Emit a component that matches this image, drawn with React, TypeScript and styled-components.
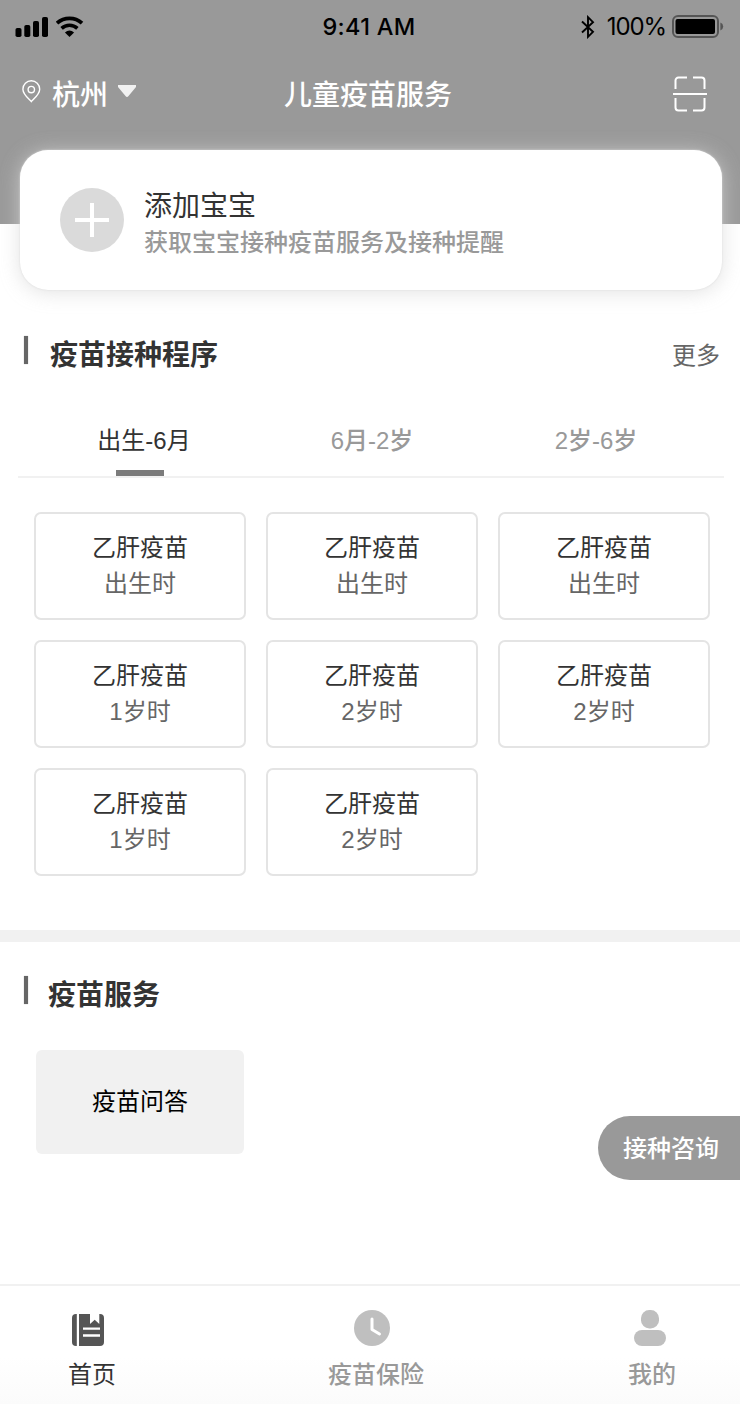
import React from 'react';
import styled, { createGlobalStyle } from 'styled-components';

const GlobalStyle = createGlobalStyle`
  * { box-sizing: border-box; }
  body {
    margin: 0;
    background: #fff;
    color: #333;
    font-family: "Liberation Sans", "Noto Sans CJK SC", sans-serif;
  }
  button { font: inherit; border: 0; padding: 0; background: none; color: inherit; }
  h1, h2, p { margin: 0; font-weight: 400; }
  svg { display: block; flex: none; }
`;

const Screen = styled.div`
  width: 740px;
  height: 1404px;
  position: relative;
  display: flex;
  flex-direction: column;
  overflow: hidden;
  background: #fff;
`;

const Header = styled.header`
  height: 224px;
  flex: none;
  background: #999;
`;

const StatusBar = styled.div`
  height: 52px;
  display: grid;
  grid-template-columns: 1fr auto 1fr;
  align-items: center;
  padding: 0 16px 0 15px;
  color: #000;
  font-family: Inter, sans-serif;
  font-size: 24px;
`;

const Signals = styled.div`
  display: flex;
  align-items: center;
  gap: 7px;
`;

const Clock = styled.span`
  font-weight: 500;
  font-size: 23.5px;
  line-height: 52px;
  letter-spacing: 0.3px;
  margin-right: 1px;
  padding-top: 1px;
`;

const Power = styled.div`
  display: flex;
  align-items: center;
  justify-content: flex-end;
`;

const Percent = styled.span`
  margin: 0 6px 0 12px;
  font-size: 24px;
  letter-spacing: -1.1px;
`;

const NavBar = styled.div`
  height: 84px;
  display: grid;
  grid-template-columns: 1fr auto 1fr;
  align-items: center;
  padding: 0 33px 0 22px;
  color: #fff;
  font-size: 28px;
  font-weight: 500;
`;

const City = styled.button`
  display: flex;
  align-items: center;
  color: #fff;
  span { margin: 0 10px 0 11px; padding-top: 4px; line-height: 40px; }
  svg { margin-bottom: 6px; }
`;

const PageTitle = styled.h1`
  font-size: 28px;
  font-weight: 500;
  line-height: 40px;
  padding-top: 4px;
  margin-left: 7px;
`;

const ScanButton = styled.button`
  justify-self: end;
`;

const AddCard = styled.section`
  width: 702px;
  height: 140px;
  flex: none;
  margin: -74px 0 0 20px;
  padding: 0 40px;
  display: flex;
  align-items: center;
  gap: 20px;
  border-radius: 28px;
  background: #fff;
  box-shadow: 0 2px 20px rgba(215, 215, 215, 0.75), 0 0 2px #ddd;
`;

const AddTitle = styled.p`
  font-size: 28px;
  line-height: 38px;
  color: #333;
`;

const AddHint = styled.p`
  font-size: 24px;
  font-weight: 500;
  line-height: 34px;
  color: #999;
`;

const AddText = styled.div`
  padding-top: 8px;
`;

const SectionHead = styled.div<{ $gap: number }>`
  height: 40px;
  display: flex;
  align-items: center;
  padding: 0 20px 0 24px;
  gap: ${(p) => p.$gap}px;
`;

const Marker = styled.i`
  width: 4px;
  height: 28px;
  margin-bottom: 8px;
  background: #666;
  box-shadow: 0 0 1px #777;
`;

const SectionTitle = styled.h2`
  font-size: 28px;
  font-weight: 700;
  line-height: 40px;
  padding-top: 4px;
  color: #333;
`;

const More = styled.a`
  margin-left: auto;
  padding-top: 3px;
  font-size: 24px;
  line-height: 40px;
  color: #666;
`;

const Schedule = styled.section`
  flex: none;
  height: 640px;
  padding-top: 44px;
`;

const Tabs = styled.div`
  height: 74px;
  margin: 30px 16px 0 18px;
  padding: 0 18px 0 10px;
  display: grid;
  grid-template-columns: 232px 224px 224px;
  border-bottom: 2px solid #f1f1f1;
`;

const Tab = styled.button<{ $active?: boolean }>`
  display: flex;
  flex-direction: column;
  align-items: center;
  justify-content: space-between;
  padding-top: 17px;
  font-size: 24px;
  font-weight: ${(p) => (p.$active ? 400 : 500)};
  line-height: 40px;
  color: ${(p) => (p.$active ? '#333' : '#999')};
  &::after {
    content: '';
    width: 48px;
    height: 6px;
    margin-right: 8px;
    background: ${(p) => (p.$active ? '#7b7b7b' : 'transparent')};
  }
`;

const VaccineGrid = styled.div`
  display: grid;
  grid-template-columns: repeat(3, 212px);
  grid-auto-rows: 108px;
  gap: 20px;
  padding: 34px 0 0 34px;
`;

const Vaccine = styled.div`
  border: 2px solid #e4e4e4;
  border-radius: 7px;
  padding-top: 16px;
  text-align: center;
  font-size: 24px;
  line-height: 36px;
  color: #333;
`;

const Age = styled.p`
  color: #666;
`;

const Services = styled.section`
  flex: 1;
  border-top: 12px solid #f1f1f1;
  padding-top: 32px;
`;

const ServiceTile = styled.button`
  display: block;
  width: 208px;
  height: 104px;
  margin: 36px 0 0 36px;
  padding-bottom: 6px;
  border-radius: 6px;
  background: #f1f1f1;
  color: #000;
  font-size: 24px;
`;

const ConsultButton = styled.button`
  position: absolute;
  right: 0;
  top: 1116px;
  width: 142px;
  height: 64px;
  padding: 0 0 4px 4px;
  border-radius: 32px 0 0 32px;
  background: #999;
  color: #fff;
  font-size: 24px;
  font-weight: 500;
`;

const TabBar = styled.nav`
  height: 120px;
  flex: none;
  display: flex;
  padding: 24px 0 0 68px;
  border-top: 2px solid #f1f1f1;
  background: linear-gradient(#fff 60%, #fbfbfb);
`;

const TabItem = styled.a<{ $before?: number; $shift: number; $active?: boolean }>`
  display: flex;
  flex-direction: column;
  align-items: center;
  margin-left: ${(p) => p.$before ?? 0}px;
  font-size: 24px;
  line-height: 36px;
  color: ${(p) => (p.$active ? '#333' : '#999')};
  font-weight: ${(p) => (p.$active ? 400 : 500)};
  svg { margin: 0 ${(p) => p.$shift}px 11px 0; }
`;

const CellularIcon = () => (
  <svg width="34" height="22" viewBox="0 0 34 22">
    <rect x="0.5" y="12" width="6" height="9" rx="1.8" />
    <rect x="9.3" y="9" width="6" height="12" rx="1.8" />
    <rect x="18" y="5" width="6" height="16" rx="1.8" />
    <rect x="27" y="1" width="6" height="20" rx="1.8" />
  </svg>
);

const WifiIcon = () => (
  <svg width="28" height="22" viewBox="0 0 28 22" fill="none" stroke="#000">
    <path d="M1 7.7A18.6 18.6 0 0 1 26 7.7" strokeWidth="3.8" transform="translate(0 -.5)" />
    <path d="M5.6 12.4A11.6 11.6 0 0 1 21.4 12.4" strokeWidth="3.6" />
    <path d="M8.9 16.4Q13.5 12.8 18.1 16.4L13.5 21Z" fill="#000" stroke="none" />
  </svg>
);

const BluetoothIcon = () => (
  <svg width="14" height="24" viewBox="0 0 14 24" fill="none" stroke="#000" strokeWidth="1.9">
    <path d="M1 6.5 12 16.8 7 21.8V2.2L12 7.2 1 17.5" />
  </svg>
);

const BatteryIcon = () => (
  <svg width="52" height="24" viewBox="0 0 52 24">
    <rect x="1" y="1" width="45" height="21" rx="5" fill="none" stroke="#555" strokeWidth="2" />
    <rect x="3.5" y="4" width="39.5" height="15" rx="2" />
    <path d="M48.4 7.6Q51.2 8.7 51.2 11.5T48.4 15.4Z" fill="#555" />
  </svg>
);

const PinIcon = () => (
  <svg width="19" height="23" viewBox="0 0 19 23" fill="none" stroke="#fff" strokeWidth="1.4">
    <path d="M9.3 21.6C6.5 18.6.9 14.2.9 9.2a8.4 8.4 0 0 1 16.8 0c0 5-5.6 9.4-8.4 12.4Z" />
    <circle cx="9.3" cy="9.6" r="3.2" />
  </svg>
);

const CaretIcon = () => (
  <svg width="18" height="12" viewBox="0 0 18 12" fill="#f1f1f1">
    <path d="M0 0H18V2L10.5 11Q9 13 7.5 11L0 2Z" />
  </svg>
);

const ScanIcon = () => (
  <svg width="34" height="36" viewBox="0 0 34 36" fill="none" stroke="#fff" strokeWidth="2">
    <path d="M2.5 13V4.5A3 3 0 0 1 5.5 1.5H14M20 1.5H28.5A3 3 0 0 1 31.5 4.5V13M2.5 22V31.5A3 3 0 0 0 5.5 34.5H14M20 34.5H28.5A3 3 0 0 0 31.5 31.5V22M0 18H34" />
  </svg>
);

const PlusIcon = () => (
  <svg width="64" height="64" viewBox="0 0 64 64">
    <circle cx="32" cy="32" r="32" fill="#dadada" />
    <path d="M15 32H49M32 15V49" stroke="#fff" strokeWidth="4" />
  </svg>
);

const BookIcon = () => (
  <svg width="32" height="36" viewBox="0 0 32 36">
    <path d="M4.8 4V36H4A4 4 0 0 1 0 32V8A4 4 0 0 1 4 4Z" fill="#555" />
    <path d="M7 4H18V14L22.7 9.7 27.3 14V4H28A4 4 0 0 1 32 8V32A4 4 0 0 1 28 36H7Z" fill="#555" />
    <path d="M11 18.6H28M11 25.5H28" stroke="#fff" strokeWidth="2.4" />
  </svg>
);

const HistoryIcon = () => (
  <svg width="36" height="36" viewBox="0 0 36 36">
    <circle cx="18" cy="18" r="18" fill="#bfbfbf" />
    <path d="M18 9V19.5L25.5 24" fill="none" stroke="#fff" strokeWidth="3" strokeLinecap="round" strokeLinejoin="round" />
  </svg>
);

const PersonIcon = () => (
  <svg width="32" height="36" viewBox="0 0 32 36" fill="#bfbfbf">
    <rect x="7" y="0" width="18" height="18.5" rx="8.3" />
    <rect x="0" y="20" width="32" height="16" rx="8" />
  </svg>
);

const ages = ['出生时', '出生时', '出生时', '1岁时', '2岁时', '2岁时', '1岁时', '2岁时'];

export default function App() {
  return (
    <>
      <GlobalStyle />
      <Screen>
        <Header>
          <StatusBar>
            <Signals>
              <CellularIcon />
              <WifiIcon />
            </Signals>
            <Clock>9:41 AM</Clock>
            <Power>
              <BluetoothIcon />
              <Percent>100%</Percent>
              <BatteryIcon />
            </Power>
          </StatusBar>
          <NavBar>
            <City>
              <PinIcon />
              <span>杭州</span>
              <CaretIcon />
            </City>
            <PageTitle>儿童疫苗服务</PageTitle>
            <ScanButton aria-label="扫一扫">
              <ScanIcon />
            </ScanButton>
          </NavBar>
        </Header>

        <AddCard>
          <PlusIcon />
          <AddText>
            <AddTitle>添加宝宝</AddTitle>
            <AddHint>获取宝宝接种疫苗服务及接种提醒</AddHint>
          </AddText>
        </AddCard>

        <Schedule>
          <SectionHead $gap={22}>
            <Marker />
            <SectionTitle>疫苗接种程序</SectionTitle>
            <More>更多</More>
          </SectionHead>
          <Tabs>
            <Tab $active>出生-6月</Tab>
            <Tab>6月-2岁</Tab>
            <Tab>2岁-6岁</Tab>
          </Tabs>
          <VaccineGrid>
            {ages.map((age, i) => (
              <Vaccine key={i}>
                <p>乙肝疫苗</p>
                <Age>{age}</Age>
              </Vaccine>
            ))}
          </VaccineGrid>
        </Schedule>

        <Services>
          <SectionHead $gap={20}>
            <Marker />
            <SectionTitle>疫苗服务</SectionTitle>
          </SectionHead>
          <ServiceTile>疫苗问答</ServiceTile>
        </Services>

        <ConsultButton>接种咨询</ConsultButton>

        <TabBar>
          <TabItem $active $shift={8}>
            <BookIcon />
            首页
          </TabItem>
          <TabItem $before={212} $shift={8}>
            <HistoryIcon />
            疫苗保险
          </TabItem>
          <TabItem $before={204} $shift={4}>
            <PersonIcon />
            我的
          </TabItem>
        </TabBar>
      </Screen>
    </>
  );
}
